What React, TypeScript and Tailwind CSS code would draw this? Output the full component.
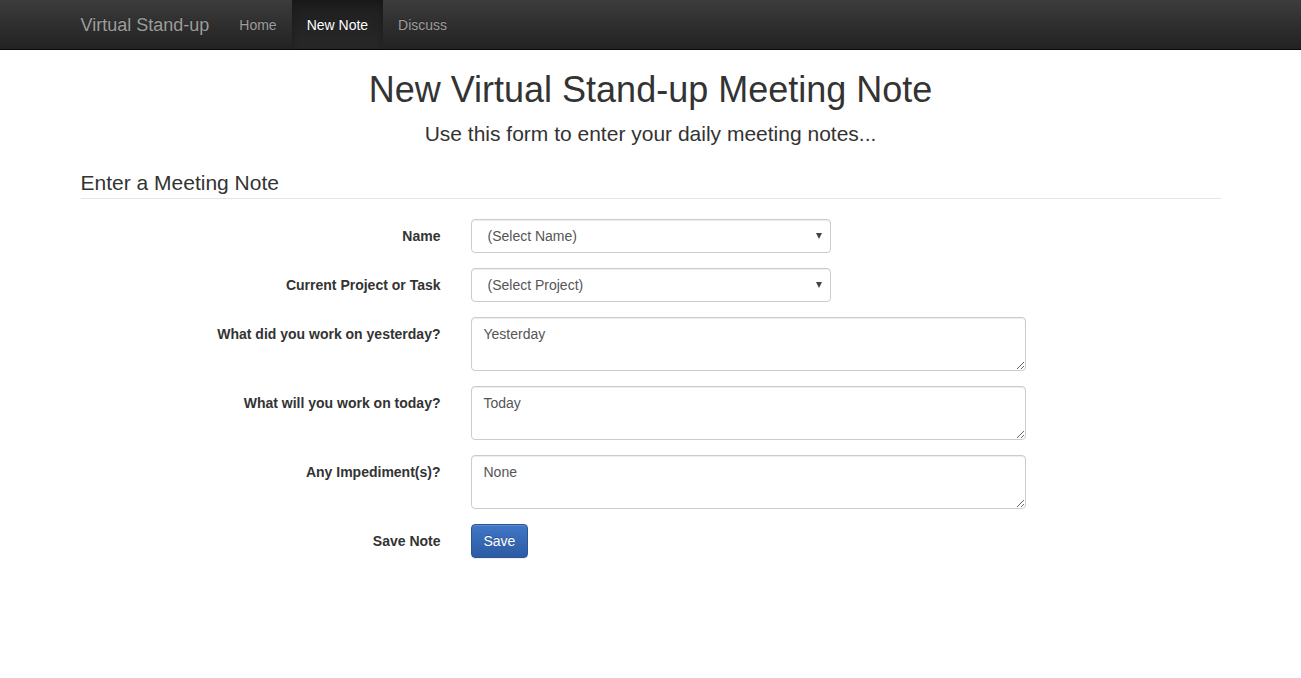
import React from 'react';

const font = { fontFamily: '"Liberation Sans", Arial, sans-serif' };

const NavBar: React.FC = () => (
  <nav className="h-[50px] border-b border-[#080808] bg-gradient-to-b from-[#3c3c3c] to-[#222222]">
    <div className="mx-auto flex h-full w-[1170px] px-[15px]">
      <a className="h-[50px] px-[15px] -ml-[15px] py-[15px] text-[18px] leading-[20px] text-[#9d9d9d] [text-shadow:0_-1px_0_rgba(0,0,0,0.25)]">
        Virtual Stand-up
      </a>
      <ul className="flex">
        <li>
          <a className="block px-[15px] py-[15px] text-[14px] leading-[20px] text-[#9d9d9d] [text-shadow:0_-1px_0_rgba(0,0,0,0.25)]">Home</a>
        </li>
        <li>
          <a className="block h-[49px] bg-gradient-to-b from-[#1e1e1e] to-[#282828] px-[15px] py-[15px] text-[14px] leading-[20px] text-white shadow-[inset_0_3px_9px_rgba(0,0,0,0.25)] [text-shadow:0_-1px_0_rgba(0,0,0,0.25)]">
            New Note
          </a>
        </li>
        <li>
          <a className="block px-[15px] py-[15px] text-[14px] leading-[20px] text-[#9d9d9d] [text-shadow:0_-1px_0_rgba(0,0,0,0.25)]">Discuss</a>
        </li>
      </ul>
    </div>
  </nav>
);

const Label: React.FC<{ text: string }> = ({ text }) => (
  <label className="w-[390px] shrink-0 px-[15px] pt-[7px] text-right text-[14px] font-bold leading-[20px] text-[#333]">
    {text}
  </label>
);

const SelectBox: React.FC<{ placeholder: string }> = ({ placeholder }) => (
  <div className="relative w-[390px] px-[15px]">
    <select
      defaultValue=""
      className="block h-[34px] w-full appearance-none rounded-[4px] border border-[#ccc] bg-white pl-[16px] pr-[24px] text-[14px] leading-[20px] text-[#555] shadow-[inset_0_1px_1px_rgba(0,0,0,0.075)] outline-none"
      style={font}
    >
      <option value="">{placeholder}</option>
    </select>
    <span className="pointer-events-none absolute right-[24px] top-[14px] h-0 w-0 border-x-[3px] border-t-[6px] border-x-transparent border-t-[#444]" />
  </div>
);

const TextBox: React.FC<{ value: string }> = ({ value }) => (
  <div className="w-[585px] px-[15px]">
    <textarea
      rows={2}
      defaultValue={value}
      className="block h-[54px] w-full rounded-[4px] border border-[#ccc] bg-white px-[12px] py-[6px] text-[14px] leading-[20px] text-[#555] shadow-[inset_0_1px_1px_rgba(0,0,0,0.075)] outline-none"
      style={font}
    />
  </div>
);

export default function App() {
  return (
    <div className="min-h-screen bg-white text-[14px] leading-[20px] text-[#333]" style={font}>
      <NavBar />
      <div className="mx-auto w-[1170px] px-[15px]">
        <h1 className="mt-[20px] mb-[9px] text-center text-[36px] font-medium leading-[39.6px]">
          New Virtual Stand-up Meeting Note
        </h1>
        <p className="mb-[20px] text-center text-[21px] font-light leading-[29.4px]">
          Use this form to enter your daily meeting notes...
        </p>
        <form>
          <div className="mb-[20px] border-b border-[#e5e5e5] text-[21px] leading-[30px] text-[#333]">
            Enter a Meeting Note
          </div>
          <div className="-mx-[15px] flex flex-col gap-[15px]">
            <div className="flex">
              <Label text="Name" />
              <SelectBox placeholder="(Select Name)" />
            </div>
            <div className="flex">
              <Label text="Current Project or Task" />
              <SelectBox placeholder="(Select Project)" />
            </div>
            <div className="flex">
              <Label text="What did you work on yesterday?" />
              <TextBox value="Yesterday" />
            </div>
            <div className="flex">
              <Label text="What will you work on today?" />
              <TextBox value="Today" />
            </div>
            <div className="flex">
              <Label text="Any Impediment(s)?" />
              <TextBox value="None" />
            </div>
            <div className="flex">
              <Label text="Save Note" />
              <div className="px-[15px]">
                <button
                  type="button"
                  className="h-[34px] rounded-[4px] border border-[#2a5596] bg-gradient-to-b from-[#4077c6] to-[#2c5ba3] px-[12px] text-[14px] leading-[20px] text-white shadow-[inset_0_1px_0_rgba(255,255,255,0.15),0_1px_1px_rgba(0,0,0,0.075)] [text-shadow:0_-1px_0_rgba(0,0,0,0.2)]"
                  style={font}
                >
                  Save
                </button>
              </div>
            </div>
          </div>
        </form>
      </div>
    </div>
  );
}
